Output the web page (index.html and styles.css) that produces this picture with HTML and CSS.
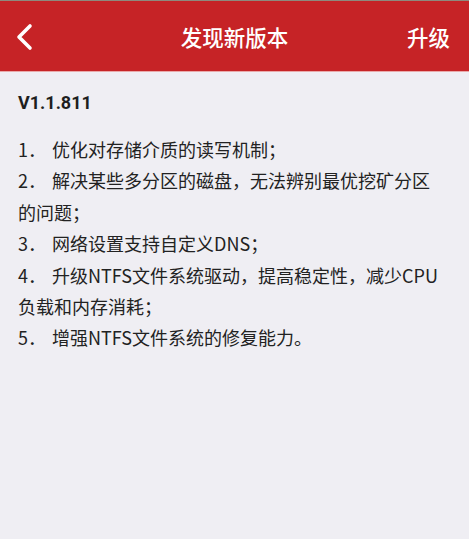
FILE: index.html
```html
<!DOCTYPE html>
<html lang="zh-CN">
<head>
<meta charset="utf-8">
<title>发现新版本</title>
<link rel="stylesheet" href="styles.css">
</head>
<body>
<header class="bar">
  <span class="back">
    <svg width="20" height="28" viewBox="0 0 20 28"><path d="M16 3 L5 14 L16 25" fill="none" stroke="#fff" stroke-width="3.6" stroke-linecap="round" stroke-linejoin="round"/></svg>
  </span>
  <h1 class="title">发现新版本</h1>
  <span class="action">升级</span>
</header>
<main class="content">
  <div class="version">V1.1.811</div>
  <ol class="notes">
    <li>1． 优化对存储介质的读写机制；</li>
    <li>2． 解决某些多分区的磁盘，无法辨别最优挖矿分区的问题；</li>
    <li>3． 网络设置支持自定义DNS；</li>
    <li>4． 升级NTFS文件系统驱动，提高稳定性，减少CPU负载和内存消耗；</li>
    <li>5． 增强NTFS文件系统的修复能力。</li>
  </ol>
</main>
</body>
</html>
```
FILE: styles.css
```css
html, body {
  margin: 0;
  padding: 0;
  background: #efeef3;
  height: 100%;
}
body {
  font-family: "Noto Sans CJK SC", "Noto Sans", sans-serif;
  color: #222;
}
.bar {
  height: 70px;
  background: #c62326;
  border-top: 1px solid #8e8a7e;
  border-bottom: 1px solid #e9a9aa;
  display: flex;
  align-items: center;
  justify-content: space-between;
  position: relative;
  padding: 0 19px 0 14px;
  color: #fff;
}
.back {
  display: flex;
  align-items: center;
  width: 20px;
  height: 28px;
  margin-top: 2px;
}
.title {
  position: absolute;
  left: 0;
  right: 0;
  top: 0;
  bottom: 0;
  margin: 0;
  display: flex;
  align-items: center;
  justify-content: center;
  font-size: 21.5px;
  font-weight: 500;
  pointer-events: none;
}
.action {
  font-size: 21.5px;
  font-weight: 500;
}
.content {
  padding: 18px 28px 0 18px;
}
.version {
  font-weight: 700;
  font-size: 18px;
  line-height: 26px;
  font-family: Roboto, "Noto Sans CJK SC", sans-serif;
  color: #1e1e1e;
}
.notes {
  list-style: none;
  margin: 18px 0 0;
  padding: 0;
  font-size: 18px;
  line-height: 31.4px;
  color: #222;
}
.notes li {
  margin: 0;
  word-spacing: 2px;
}
```
